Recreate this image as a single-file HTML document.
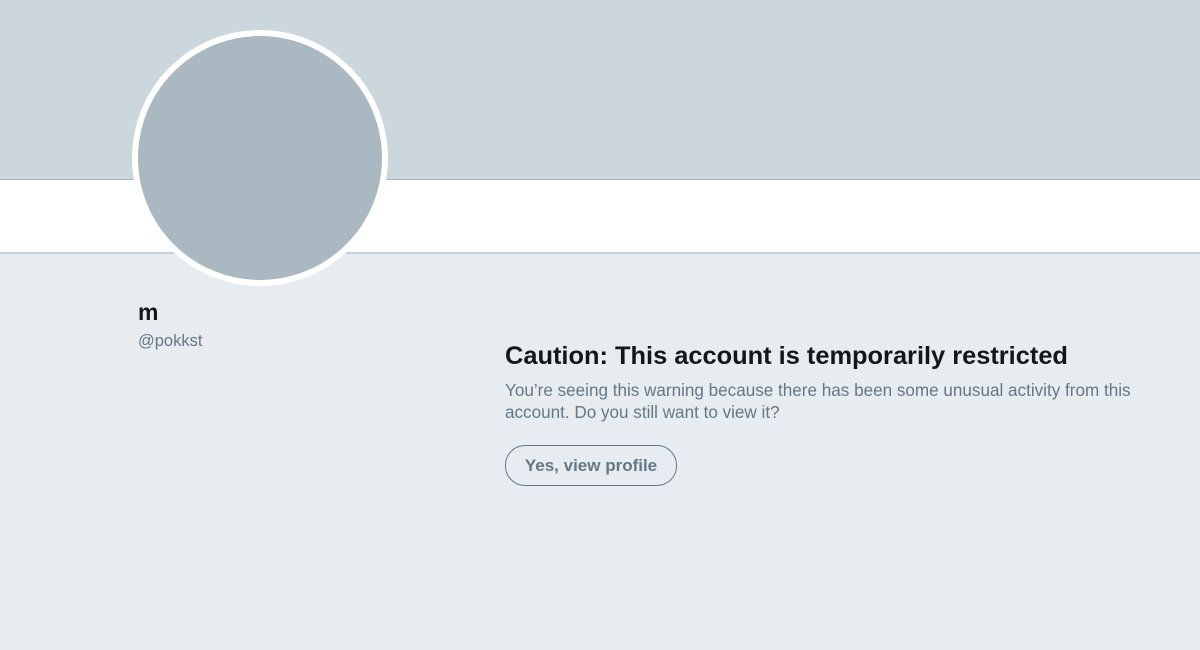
<!DOCTYPE html>
<html><head><style>
body{margin:0;width:1200px;height:650px;overflow:hidden;background:#e6ecf0;font-family:"Liberation Sans",Arial,sans-serif;position:relative}
.ban{position:absolute;left:0;top:0;width:1200px;height:179px;background:#ccd6dd;border-bottom:1px solid #a9b4bc}
.nav{position:absolute;left:0;top:180px;width:1200px;height:72px;background:#fff;border-bottom:2px solid #c9d0d5}
.av{position:absolute;left:132px;top:30px;width:244px;height:244px;border:6px solid #fff;border-radius:50%;background:#aab8c2}
.name{position:absolute;left:138px;top:299px;font-size:23px;font-weight:bold;color:#14171a}
.sn{position:absolute;left:138px;top:332px;font-size:16.5px;color:#657786}
h1{position:absolute;left:505px;top:342px;margin:0;font-size:25.4px;font-weight:bold;color:#14171a;white-space:nowrap}
p{position:absolute;left:505px;top:380px;margin:0;width:660px;font-size:17.1px;line-height:22px;color:#657786}
.btn{position:absolute;left:505px;top:445px;border:1px solid #657786;border-radius:20px;box-sizing:border-box;width:172px;height:41px;text-align:center;line-height:39px;font-size:17px;font-weight:bold;color:#657786}
</style></head><body>
<div class="ban"></div><div class="nav"></div><div class="av"></div>
<div class="name">m</div><div class="sn">@pokkst</div>
<h1>Caution: This account is temporarily restricted</h1>
<p>You’re seeing this warning because there has been some unusual activity from this account. Do you still want to view it?</p>
<div class="btn">Yes, view profile</div>
</body></html>
